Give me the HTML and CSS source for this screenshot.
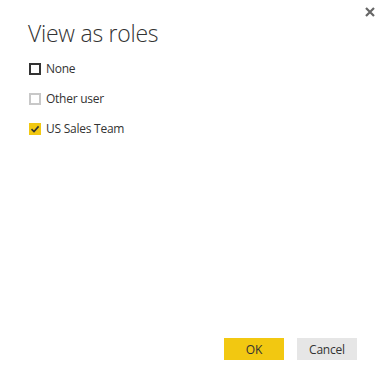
FILE: index.html
```html
<!DOCTYPE html>
<html>
<head>
<meta charset="utf-8">
<link rel="stylesheet" href="styles.css">
</head>
<body>
<div class="dialog">
  <button class="close" aria-label="Close">
    <svg width="10" height="10" viewBox="0 0 10 10"><path d="M1 1 L9 9 M9 1 L1 9" stroke="#666" stroke-width="2.2" fill="none"/></svg>
  </button>
  <h1 class="title">View as roles</h1>
  <ul class="roles">
    <li class="role"><span class="box box-dark"></span><span class="label">None</span></li>
    <li class="role"><span class="box box-light"></span><span class="label">Other user</span></li>
    <li class="role"><span class="box box-checked"><svg width="12" height="12" viewBox="0 0 12 12"><path d="M2.5 6.2 L5 8.6 L9.6 3.4" stroke="#333" stroke-width="1.6" fill="none"/></svg></span><span class="label">US Sales Team</span></li>
  </ul>
  <div class="spacer"></div>
  <div class="actions">
    <button class="btn btn-ok">OK</button>
    <button class="btn btn-cancel">Cancel</button>
  </div>
</div>
</body>
</html>
```
FILE: styles.css
```css
html, body {
  margin: 0;
  padding: 0;
  background: #fff;
}
body {
  font-family: "Open Sans", "Noto Sans", sans-serif;
  color: #333;
}
.dialog {
  position: relative;
  width: 385px;
  height: 387px;
  box-sizing: border-box;
  padding: 16px 28px 0 29px;
  display: flex;
  flex-direction: column;
}
.close {
  position: absolute;
  top: 7px;
  right: 10px;
  width: 10px;
  height: 10px;
  padding: 0;
  border: 0;
  background: none;
  display: flex;
}
.title {
  margin: 0 0 0 -1px;
  font-weight: 300;
  font-size: 23px;
  line-height: 34px;
  color: #333;
  letter-spacing: -0.25px;
}
.roles {
  list-style: none;
  margin: 10px 0 0 0;
  padding: 0;
  display: flex;
  flex-direction: column;
  gap: 12px;
}
.role {
  display: flex;
  align-items: center;
  height: 18px;
  gap: 5px;
}
.box {
  width: 12px;
  height: 12px;
  box-sizing: border-box;
  display: flex;
}
.box-dark { border: 2px solid #333; }
.box-light { border: 2px solid #c8c8c8; }
.box-checked { background: #f2c811; }
.label {
  font-size: 12px;
  color: #333;
  line-height: 18px;
  letter-spacing: -0.25px;
}
.spacer { flex: 1; }
.actions {
  display: flex;
  justify-content: flex-end;
  gap: 13px;
  margin-bottom: 27px;
}
.btn {
  width: 60px;
  height: 22px;
  border: 0;
  padding: 0;
  font-family: "Open Sans", "Noto Sans", sans-serif;
  font-size: 12px;
  color: #333;
  letter-spacing: -0.2px;
}
.btn-ok { background: #f2c811; }
.btn-cancel { background: #e6e6e6; }
```
